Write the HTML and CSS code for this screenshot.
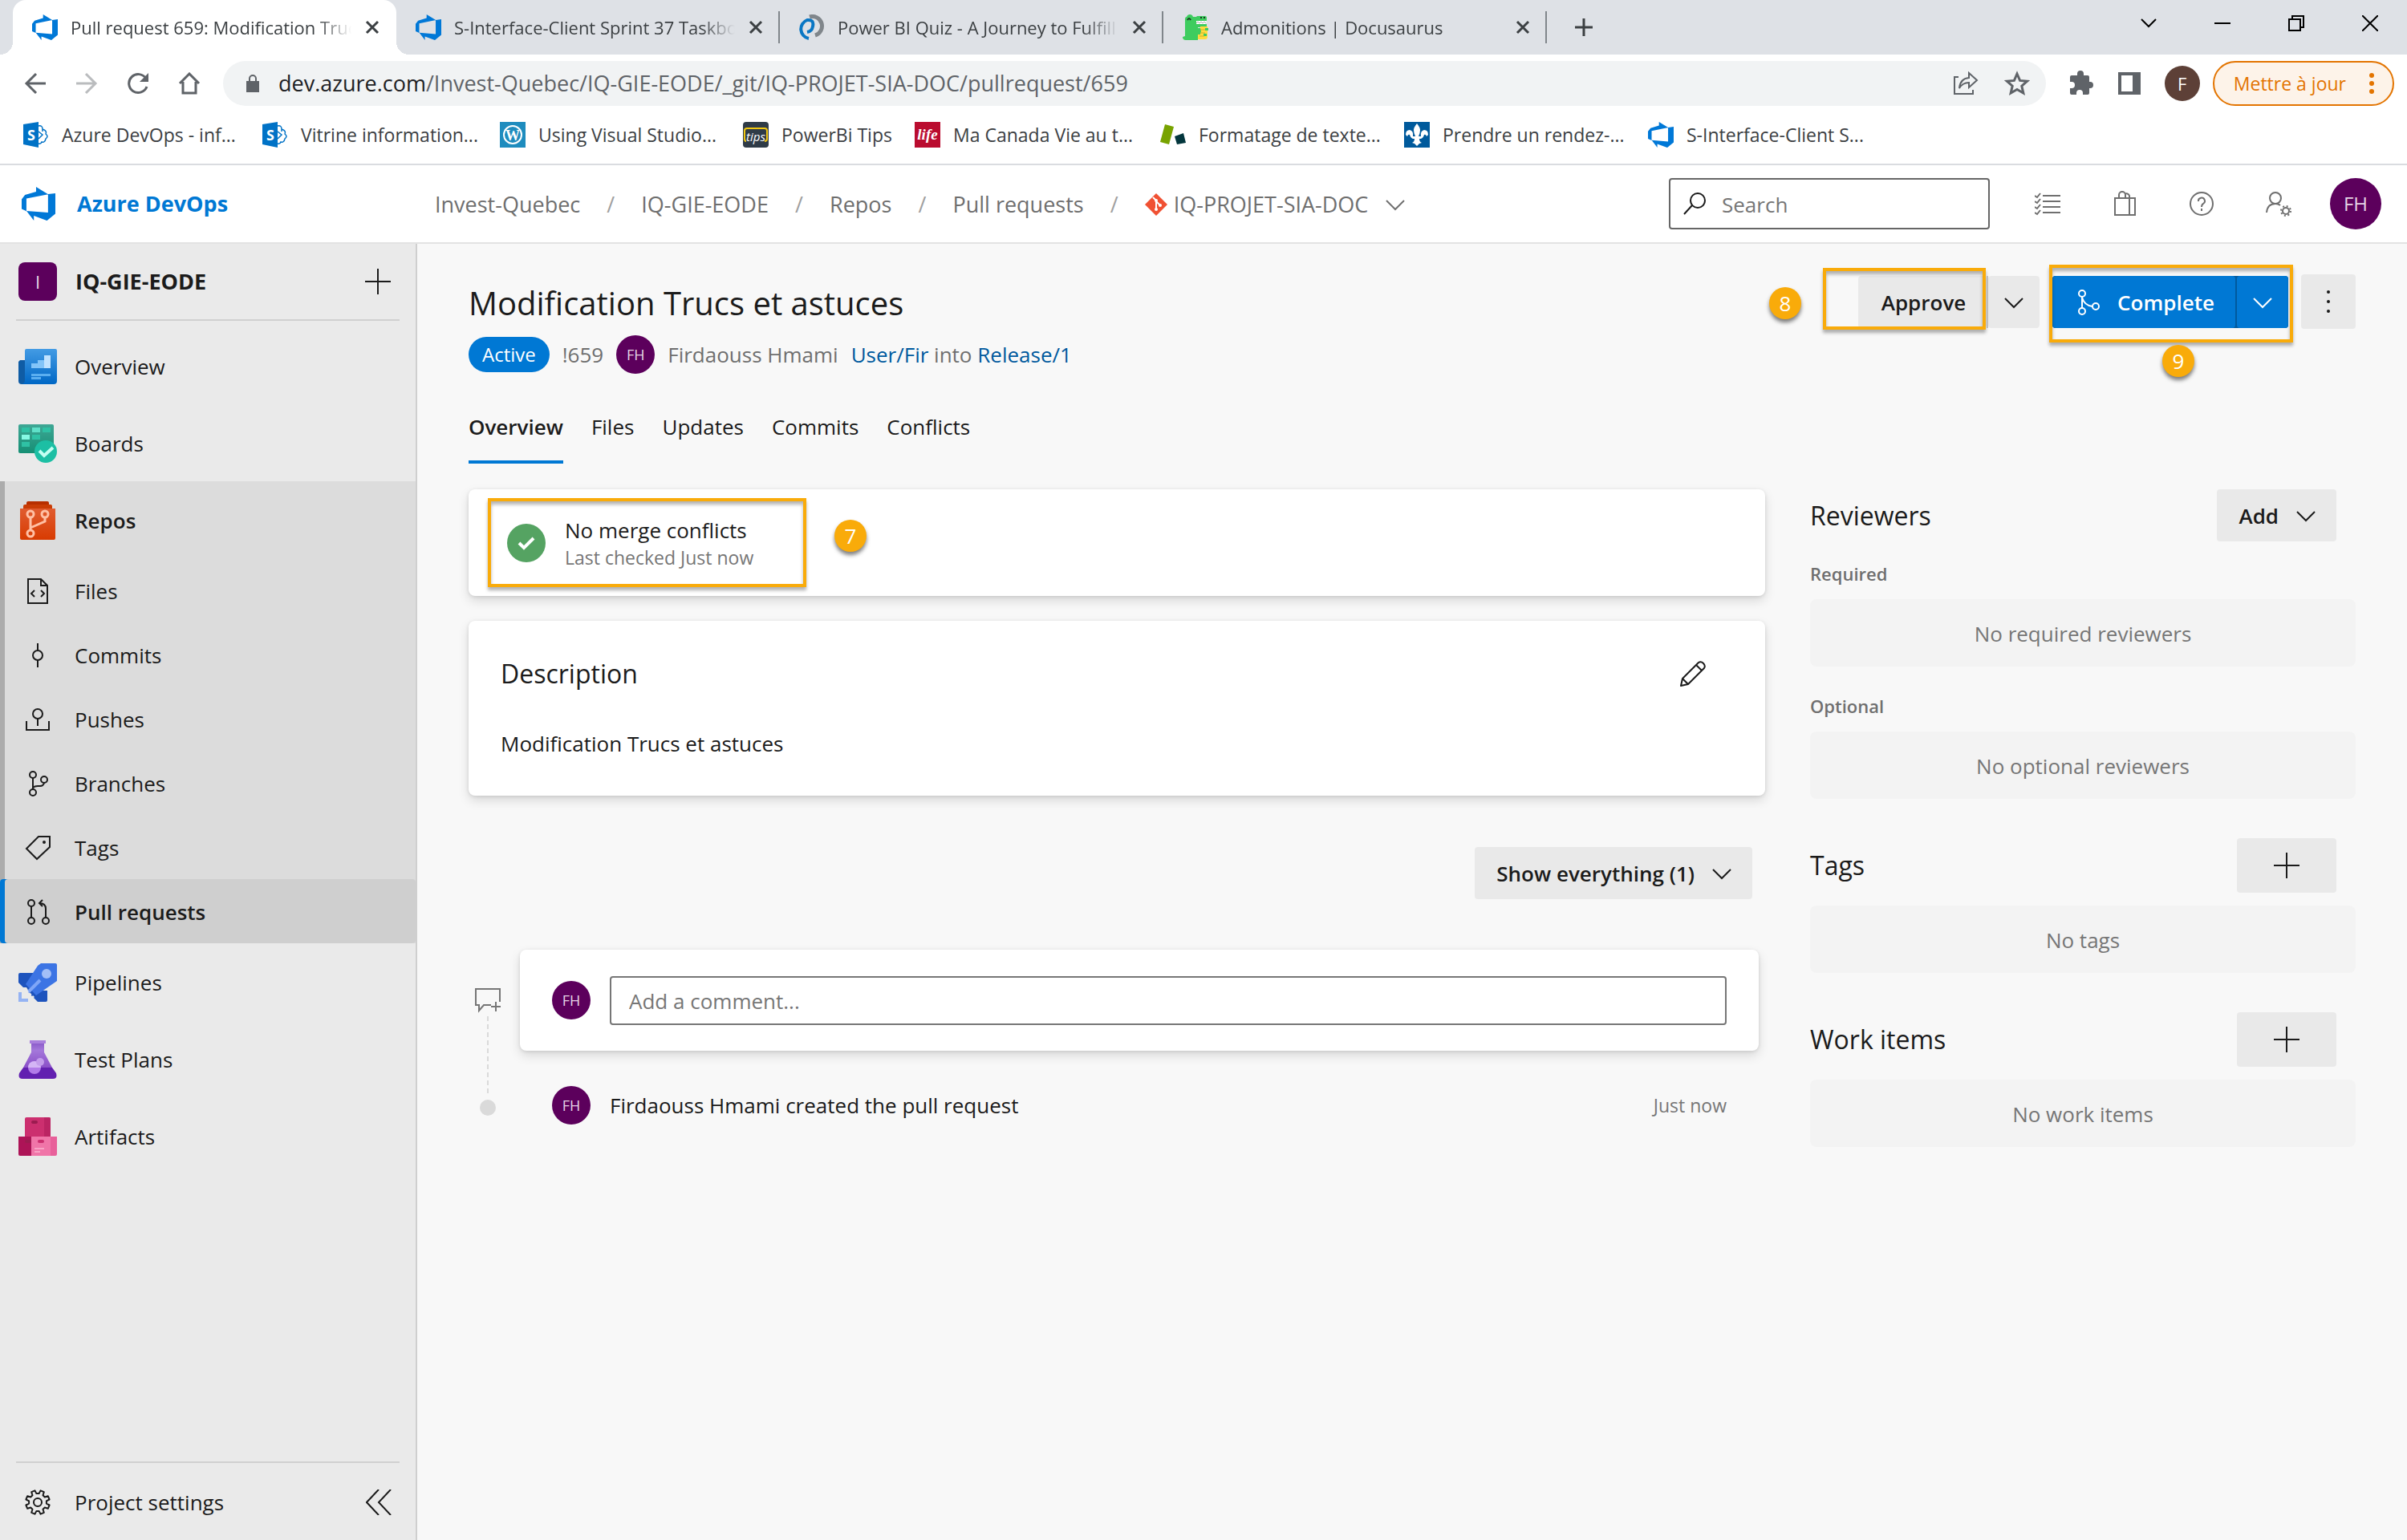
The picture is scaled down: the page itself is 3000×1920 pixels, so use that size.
FILE: index.html
```html
<!DOCTYPE html>
<html lang="en">
<head>
<meta charset="utf-8">
<title>Pull request 659: Modification Trucs et astuces</title>
<link rel="stylesheet" href="styles.css">
</head>
<body>
<svg class="sprite" aria-hidden="true">
  <symbol id="devops" viewBox="1 1 16 16"><path fill="#0078d7" d="M17 4v9.74l-4 3.28-6.2-2.26V17l-3.51-4.59 10.23.8V4.44zm-3.41.49L7.85 1v2.29L2.58 4.84 1 6.87v4.61l2.26 1V6.57z"/></symbol>
  <symbol id="close" viewBox="0 0 20 20"><path d="M3 3l14 14M17 3L3 17" fill="none" stroke="currentColor" stroke-width="3"/></symbol>
  <symbol id="chevron" viewBox="0 0 28 28"><path d="M3 9l11 11L25 9" fill="none" stroke="currentColor" stroke-width="2"/></symbol>
  <symbol id="plus" viewBox="0 0 32 32"><path d="M16 0v32M0 16h32" fill="none" stroke="currentColor" stroke-width="2"/></symbol>
  <symbol id="sharepoint" viewBox="0 0 32 32"><path fill="#0072c6" d="M0 3l19-3v32L0 28z"/><path d="M19 5q5-1 5 4 6 2 4 6 4 3 0 6-1 5-5 4-1 3-4 2M19 12l5 4-5 5M24 9v3" fill="none" stroke="#0072c6" stroke-width="1.5"/><text x="5" y="23" class="glyph-s">S</text></symbol>
  <symbol id="gear" viewBox="0 0 32 32"><path d="M17.6 5.1L19.5 1.4 23.8 3.2 22.5 7.2 24.8 9.5 28.8 8.2 30.6 12.5 26.9 14.4V17.6L30.6 19.5 28.8 23.8 24.8 22.5 22.5 24.8 23.8 28.8 19.5 30.6 17.6 26.9H14.4L12.5 30.6 8.2 28.8 9.5 24.8 7.2 22.5 3.2 23.8 1.4 19.5 5.1 17.6V14.4L1.4 12.5 3.2 8.2 7.2 9.5 9.5 7.2 8.2 3.2 12.5 1.4 14.4 5.1Z" fill="none" stroke="currentColor" stroke-width="2" stroke-linejoin="round"/><circle cx="16" cy="16" r="5" fill="none" stroke="currentColor" stroke-width="2"/></symbol>
</svg>

<header class="browser">
  <div class="tabstrip">
    <div class="tab tab-active"><svg class="i32"><use href="#devops"/></svg><span class="tab-title">Pull request 659: Modification Trucs</span><button class="plain" aria-label="Close tab"><svg class="i20"><use href="#close"/></svg></button></div>
    <div class="tab"><svg class="i32"><use href="#devops"/></svg><span class="tab-title">S-Interface-Client Sprint 37 Taskboard</span><button class="plain" aria-label="Close tab"><svg class="i20"><use href="#close"/></svg></button></div>
    <div class="tab"><svg class="i32" viewBox="0 0 32 32"><path d="M13 3a12 12 0 0 1 7 23" fill="none" stroke="#80868b" stroke-width="5"/><path d="M12 30A12 12 0 0 1 10 7q9-1 7 8-1 6-7 7" fill="none" stroke="#0a77c4" stroke-width="4"/></svg><span class="tab-title">Power BI Quiz - A Journey to Fulfill</span><button class="plain" aria-label="Close tab"><svg class="i20"><use href="#close"/></svg></button></div>
    <div class="tab"><svg class="i32" viewBox="0 0 32 32"><path fill="#3ecc5f" d="M3 6q0-3 2-3 1-3 4-3t4 3h4l1-1h10q2 0 2 2v5H17v3h13v4H19v3h4v8h-4v5H4q-4 0-4-4l3-1z"/><path fill="#ffdb3d" d="M22 15h9v13q0 3-3 3h-9v-6h3z"/><path fill="#3ecc5f" d="M16 17h6l1 4-1 3h-6zM28 17h4v3h-4zM26 24h4v3h-4z"/><path d="M22 19h6M22 23h6M21 27h6" stroke="#c9b42c"/><path d="M17 8h13l-1 4H17z" fill="#fff"/><path d="M17 11l2-2 2 2 2-2 2 2 2-2 2 2" fill="none" stroke="#aaa"/><path d="M6 7q2-4 4 0M22 4h2M26 4h2" fill="none" stroke="#1d3a24" stroke-width="2"/></svg><span class="tab-title">Admonitions | Docusaurus</span><button class="plain" aria-label="Close tab"><svg class="i20"><use href="#close"/></svg></button></div>
    <button class="plain new-tab" aria-label="New tab"><svg class="i24" viewBox="0 0 24 24"><path d="M12 1v22M1 12h22" stroke="currentColor" stroke-width="3"/></svg></button>
    <div class="window-buttons">
      <button class="plain" aria-label="Search tabs"><svg class="i20" viewBox="0 0 20 20"><path d="M1 5l9 9 9-9" fill="none" stroke="#000" stroke-width="2"/></svg></button>
      <button class="plain" aria-label="Minimize"><svg class="i20" viewBox="0 0 20 20"><path d="M0 10h20" stroke="#000" stroke-width="2"/></svg></button>
      <button class="plain" aria-label="Restore"><svg class="i20" viewBox="0 0 20 20"><path d="M1 5h14v14H1zM5 5V1h14v14h-4" fill="none" stroke="#000" stroke-width="2"/></svg></button>
      <button class="plain" aria-label="Close window"><svg class="i20" viewBox="0 0 20 20"><path d="M0 0l20 20M20 0L0 20" stroke="#000" stroke-width="2"/></svg></button>
    </div>
  </div>

  <div class="toolbar">
    <div class="nav-buttons">
      <button class="plain" aria-label="Back"><svg class="i28" viewBox="0 0 28 28"><path d="M27 14H3M15 2L3 14l12 12" fill="none" stroke="currentColor" stroke-width="3"/></svg></button>
      <button class="plain disabled" aria-label="Forward"><svg class="i28" viewBox="0 0 28 28"><path d="M1 14h24M13 2l12 12-12 12" fill="none" stroke="currentColor" stroke-width="3"/></svg></button>
      <button class="plain" aria-label="Reload"><svg class="i28" viewBox="0 0 28 28"><path d="M24 8A11.500 11.500 0 1 0 25 18" fill="none" stroke="currentColor" stroke-width="3"/><path d="M27 1v11H16z" fill="currentColor"/></svg></button>
      <button class="plain" aria-label="Home"><svg class="i28" viewBox="0 0 28 28"><path d="M2 14L14 2l12 12M6 12v14h16V12" fill="none" stroke="currentColor" stroke-width="3"/></svg></button>
    </div>
    <div class="address">
      <svg class="lock" viewBox="0 0 18 24"><path d="M1 9h16v14H1z" fill="currentColor"/><path d="M5 10V6a4 4 0 0 1 8 0v4" fill="none" stroke="currentColor" stroke-width="2"/></svg>
      <span class="url"><span class="host">dev.azure.com</span>/Invest-Quebec/IQ-GIE-EODE/_git/IQ-PROJET-SIA-DOC/pullrequest/659</span>
      <button class="plain" aria-label="Share"><svg class="i32" viewBox="0 0 32 32"><path d="M7 8H2v21h23v-5" fill="none" stroke="currentColor" stroke-width="2"/><path d="M8 22q1-12 12-13V3l10 9-10 9v-6q-8 0-12 7z" fill="none" stroke="currentColor" stroke-width="2"/></svg></button>
      <button class="plain" aria-label="Bookmark"><svg class="i32" viewBox="0 0 32 32"><path d="M16 4l3.600 8.400 9 .8-6.800 6 2 8.800L16 23.400 8.200 28l2-8.800-6.800-6 9-.8z" fill="none" stroke="currentColor" stroke-width="3"/></svg></button>
    </div>
    <button class="plain" aria-label="Extensions"><svg class="i32" viewBox="0 0 32 32"><path fill="currentColor" d="M2 8q0-2 2-2h7V4a4 4 0 0 1 8 0v2h5q2 0 2 2v6h1a4 4 0 0 1 0 8h-1v6q0 2-2 2h-6v-2a4 4 0 0 0-8 0v2H4q-2 0-2-2v-6h2a4 4 0 0 0 0-8H2z"/></svg></button>
    <button class="plain" aria-label="Side panel"><svg class="i32" viewBox="0 0 32 32"><path fill="currentColor" fill-rule="evenodd" d="M2 2h28v28H2zM6 6v20h14V6z"/></svg></button>
    <span class="profile">F</span>
    <button class="update">Mettre à jour<svg class="dots" viewBox="0 0 8 28"><circle cx="4" cy="4" r="3"/><circle cx="4" cy="14" r="3"/><circle cx="4" cy="24" r="3"/></svg></button>
  </div>

  <nav class="bookmarks">
    <a href="#"><svg class="i32"><use href="#sharepoint"/></svg>Azure DevOps - inf...</a>
    <a href="#"><svg class="i32"><use href="#sharepoint"/></svg>Vitrine information...</a>
    <a href="#"><svg class="i32" viewBox="0 0 32 32"><path fill="#1e8cbe" d="M0 0h32v32H0z"/><circle cx="16" cy="16" r="11" fill="none" stroke="#fff" stroke-width="2"/><text x="16" y="23" text-anchor="middle" class="glyph-w">W</text></svg>Using Visual Studio...</a>
    <a href="#"><svg class="i32" viewBox="0 0 32 32"><rect width="32" height="32" rx="4" fill="#2f3b47"/><path d="M4 24q-2 0-2-3V11q0-3 3-3h22q3 0 3 3v10q0 3-3 3" fill="none" stroke="#f2c811" stroke-width="2"/><text x="16" y="24" text-anchor="middle" class="glyph-tips">tips</text></svg>PowerBi Tips</a>
    <a href="#"><svg class="i32" viewBox="0 0 32 32"><path fill="#ba0c2f" d="M0 0h32v32H0z"/><text x="16" y="22" text-anchor="middle" class="glyph-life">life</text></svg>Ma Canada Vie au t...</a>
    <a href="#"><svg class="i32" viewBox="0 0 32 32"><path fill="#78a300" d="M6 3l11 3-6 22L0 25z"/><path fill="#03363d" d="M18 18l11-4 3 12-11 2z"/></svg>Formatage de texte...</a>
    <a href="#"><svg class="i32" viewBox="0 0 32 32"><path fill="#005a9c" d="M0 0h32v32H0z"/><path fill="#fff" d="M16 2q4 5 4 8 0 4-2 8h3q-1-7 4-8 5 0 5 6l-2 2q-1-3-3-2-1 4-4 5h-2q0 4 3 5l-3 1-3 3-3-3-3-1q3-1 3-5h-2q-3-1-4-5-2-1-3 2l-2-2q0-6 5-6 5 1 4 8h3q-2-4-2-8 0-3 4-8z"/></svg>Prendre un rendez-...</a>
    <a href="#"><svg class="i32"><use href="#devops"/></svg>S-Interface-Client S...</a>
  </nav>
</header>

<header class="app-header">
  <a class="brand" href="#"><svg class="i42"><use href="#devops"/></svg>Azure DevOps</a>
  <nav class="crumbs">
    <a href="#">Invest-Quebec</a><span class="slash">/</span><a href="#">IQ-GIE-EODE</a><span class="slash">/</span><a href="#">Repos</a><span class="slash">/</span><a href="#">Pull requests</a><span class="slash">/</span>
    <a href="#" class="repo"><svg class="i28" viewBox="0 0 28 28"><path fill="#f05133" d="M14 0l14 14-14 14L0 14z"/><path d="M10 5l4 4v11M14 10l5 5" stroke="#fff" stroke-width="2" fill="none"/><circle cx="14" cy="9" r="2" fill="#fff"/><circle cx="14" cy="20" r="2" fill="#fff"/><circle cx="19" cy="15" r="2" fill="#fff"/></svg>IQ-PROJET-SIA-DOC</a><svg class="i28 crumb-chevron"><use href="#chevron"/></svg>
  </nav>
  <label class="search"><svg class="i28" viewBox="0 0 28 28"><circle cx="18" cy="10" r="9" fill="none" stroke="#1b1b1b" stroke-width="2"/><path d="M11 16L1 27" stroke="#1b1b1b" stroke-width="2"/></svg><input type="text" placeholder="Search" aria-label="Search"></label>
  <div class="header-icons">
    <button class="plain" aria-label="My work"><svg class="i32" viewBox="0 0 32 32"><path d="M10 6h22M10 13h22M10 20h22M10 27h22M0 6l3 2 4-5M0 13l3 2 4-5M0 20l3 2 4-5M0 27l3 2 4-5" fill="none" stroke="currentColor" stroke-width="2"/></svg></button>
    <button class="plain" aria-label="Marketplace"><svg class="i32" viewBox="0 0 32 32"><path d="M4 9h25v21H4zM22 9v21M9 9V5a4 4 0 0 1 8 0v4M16 4a4 4 0 0 1 6 2v3" fill="none" stroke="currentColor" stroke-width="2"/></svg></button>
    <button class="plain" aria-label="Help"><svg class="i32" viewBox="0 0 32 32"><circle cx="16" cy="16" r="14" fill="none" stroke="currentColor" stroke-width="2"/><path d="M12 13a4 4 0 1 1 6 3q-2 1-2 4M16 22v3" fill="none" stroke="currentColor" stroke-width="2"/></svg></button>
    <button class="plain" aria-label="User settings"><svg class="i32" viewBox="0 0 32 32"><circle cx="12" cy="9" r="7" fill="none" stroke="currentColor" stroke-width="2"/><path d="M1 27q1-11 11-11 4 0 6 2" fill="none" stroke="currentColor" stroke-width="2"/><circle cx="25" cy="25" r="4" fill="none" stroke="currentColor" stroke-width="2"/><circle cx="25" cy="25" r="6" fill="none" stroke="currentColor" stroke-width="2" stroke-dasharray="2 2.710"/></svg></button>
    <span class="avatar avatar-lg">FH</span>
  </div>
</header>

<div class="workspace">
  <aside class="sidebar">
    <div class="project"><span class="tile">I</span><strong>IQ-GIE-EODE</strong><button class="plain" aria-label="New"><svg class="i32"><use href="#plus"/></svg></button></div>
    <nav class="hubs">
      <a class="hub" href="#"><svg class="i48" viewBox="0 0 48 48"><path fill="#0f5ca5" d="M2 16h8v30H4q-4 0-4-4V18z"/><defs><linearGradient id="ov" x2="0" y2="1"><stop stop-color="#439be4"/><stop offset="1" stop-color="#0067c5"/></linearGradient></defs><path fill="url(#ov)" d="M8 4q0-2 2-2h36q2 0 2 2v38q0 4-4 4H4q4-1 4-5z"/><path fill="#83c4f8" d="M16 20h8v-4h8v10H16z"/><path fill="#c0e2ff" d="M32 10h8v16h-8z"/><path fill="#5aaef0" d="M16 33h24v3H16zM16 37h12v3H16z"/></svg>Overview</a>
      <a class="hub" href="#"><svg class="i48" viewBox="0 0 48 48"><defs><linearGradient id="bo" x2="0" y2="1"><stop stop-color="#3fa795"/><stop offset="1" stop-color="#158f74"/></linearGradient></defs><rect y="0" width="44" height="36" rx="2" fill="url(#bo)"/><path fill="#2fc1a4" d="M4 4h10v6H4zM30 4h10v6H30zM17 13h10v6H17zM4 22h10v6H4z"/><path fill="#5fe0c8" d="M17 4h10v6H17z"/><path fill="#86f9e4" d="M4 13h10v6H4z"/><circle cx="34" cy="34" r="14" fill="#1cbfa4"/><path d="M26 33l6 6 11-10" fill="none" stroke="#c3fff2" stroke-width="4"/></svg>Boards</a>
      <div class="hub-group">
        <a class="hub selected-hub" href="#"><svg class="i48" viewBox="0 0 48 48"><path fill="#b72f00" d="M10 2q0-2 2-2h24q2 0 2 2v4H10z"/><path fill="#c93c05" d="M6 6q0-2 2-2h32q2 0 2 2v4H6z"/><defs><linearGradient id="re" x2="0" y2="1"><stop stop-color="#e05c30"/><stop offset="1" stop-color="#d83b01"/></linearGradient></defs><path fill="url(#re)" d="M2 9h44v37q0 2-2 2H4q-2 0-2-2z"/><g fill="none" stroke="#ffc0a5" stroke-width="3"><path d="M15 20v17M33 20v5L15 33"/><circle cx="15" cy="16" r="4"/><circle cx="33" cy="16" r="4"/><circle cx="15" cy="40" r="4"/></g></svg>Repos</a>
        <a class="sub" href="#"><span class="slot"><svg class="i32" viewBox="0 0 32 32"><path d="M4 1h16l8 8v22H4zM20 1v8h8M12 15l-4 4 4 4M20 15l4 4-4 4" fill="none" stroke="currentColor" stroke-width="2"/></svg></span>Files</a>
        <a class="sub" href="#"><span class="slot"><svg class="i32" viewBox="0 0 32 32"><circle cx="16" cy="16" r="6" fill="none" stroke="currentColor" stroke-width="2"/><path d="M16 1v9M16 22v9" stroke="currentColor" stroke-width="2"/></svg></span>Commits</a>
        <a class="sub" href="#"><span class="slot"><svg class="i32" viewBox="0 0 32 32"><circle cx="16" cy="9" r="6" fill="none" stroke="currentColor" stroke-width="2"/><path d="M16 15v9M2 18v11h28V18" fill="none" stroke="currentColor" stroke-width="2"/></svg></span>Pushes</a>
        <a class="sub" href="#"><span class="slot"><svg class="i32" viewBox="0 0 32 32"><g fill="none" stroke="currentColor" stroke-width="2"><circle cx="10" cy="5" r="4"/><circle cx="10" cy="27" r="4"/><circle cx="24" cy="11" r="4"/><path d="M10 9v14M10 21q2-2 6-2h3q4 0 5-4"/></g></svg></span>Branches</a>
        <a class="sub" href="#"><span class="slot"><svg class="i32" viewBox="0 0 32 32"><path d="M17 2h14v13L15 30 2 17z" fill="none" stroke="currentColor" stroke-width="2"/><circle cx="24" cy="9" r="2" fill="currentColor"/></svg></span>Tags</a>
        <a class="sub selected" href="#"><span class="slot"><svg class="i32" viewBox="0 0 32 32"><g fill="none" stroke="currentColor" stroke-width="2"><circle cx="8" cy="5" r="4"/><circle cx="8" cy="27" r="4"/><circle cx="26" cy="27" r="4"/><path d="M8 9v14M26 23V12q0-7-8-7M22 1l-4 4 4 4"/></g></svg></span>Pull requests</a>
      </div>
      <a class="hub" href="#"><svg class="i48" viewBox="0 0 48 48"><path fill="#1d53bd" d="M0 14q0-2 2-2h20v22h14v12q0 2-2 2H24l-8-8-6-10H6L0 24z"/><path fill="#3c74e4" d="M28 0h18q2 0 2 2v20L22 40 9 26 24 3z"/><circle cx="35" cy="13" r="6" fill="#a3bff7"/><path d="M12 36l15-15" stroke="#7fa6f7" stroke-width="4"/><path fill="#95b3f3" d="M0 36h4v8h8v4H0z"/><path d="M6 31l13 12" stroke="#eaeaea" stroke-width="3" stroke-dasharray="3 2"/></svg>Pipelines</a>
      <a class="hub" href="#"><svg class="i48" viewBox="0 0 48 48"><defs><linearGradient id="tp" x2="0" y2="1"><stop stop-color="#8a5ac9"/><stop offset=".3" stop-color="#a478da"/><stop offset="1" stop-color="#8a4fc8"/></linearGradient></defs><path fill="url(#tp)" d="M16 3h16v12l10 19H6l10-19z"/><path fill="#a97fdc" d="M14 0h20v4H14z"/><path fill="#6220b0" d="M6 34h36l5 7q2 7-4 7H5q-6 0-4-7z"/><circle cx="20" cy="34" r="8" fill="#b27be8"/><path fill="#d4b5f5" d="M12 34a8 8 0 0 1 16 0z"/><circle cx="27" cy="27" r="5" fill="#c39deb"/></svg>Test Plans</a>
      <a class="hub" href="#"><svg class="i48" viewBox="0 0 48 48"><path fill="#cc2f6f" d="M10 0h28q2 0 2 2v22H8V2q0-2 2-2z"/><path fill="#bb2463" d="M32 0h6q2 0 2 2v22h-8z"/><path fill="#ad1457" d="M0 24h16v24H2q-2 0-2-2z"/><path fill="#f075a8" d="M16 24h24v24H16z"/><path fill="#e8609a" d="M40 24h8v22q0 2-2 2h-6z"/><path stroke="#9b1c50" stroke-width="4" stroke-linecap="round" d="M18 6h4M10 30h4"/><path stroke="#cc2f6f" stroke-width="4" stroke-linecap="round" d="M26 30h4"/><path fill="#f9a3c6" d="M20 38h12v2H20zM20 42h7v2h-7z"/></svg>Artifacts</a>
    </nav>
    <div class="settings"><a href="#"><span class="slot"><svg class="i32"><use href="#gear"/></svg></span>Project settings</a><button class="plain" aria-label="Collapse"><svg class="i32" viewBox="0 0 32 32"><path d="M16 0L1 16l15 16M31 0L16 16l15 16" fill="none" stroke="currentColor" stroke-width="2"/></svg></button></div>
  </aside>

  <main class="main">
    <div class="pr-top">
      <div>
        <h1>Modification Trucs et astuces</h1>
        <div class="pr-meta"><span class="pill">Active</span><span class="pr-id">!659</span><span class="avatar">FH</span><span class="author">Firdaouss Hmami</span><span><a href="#">User/Fir</a> into <a href="#">Release/1</a></span></div>
      </div>
      <div class="actions">
        <div class="split"><button class="btn approve">Approve</button><button class="btn drop" aria-label="Approve options"><svg class="i28"><use href="#chevron"/></svg></button><span class="callout callout-approve"></span><span class="marker marker-8">8</span></div>
        <div class="split"><button class="btn primary complete"><svg class="i32" viewBox="0 0 32 32"><g fill="none" stroke="currentColor" stroke-width="2"><circle cx="8" cy="5" r="4"/><circle cx="8" cy="27" r="4"/><circle cx="25" cy="21" r="4"/><path d="M8 9v14M8 10q3 10 13 11"/></g></svg>Complete</button><button class="btn primary drop" aria-label="Complete options"><svg class="i28"><use href="#chevron"/></svg></button><span class="callout callout-complete"></span><span class="marker marker-9">9</span></div>
        <button class="btn more" aria-label="More actions"><svg class="dots" viewBox="0 0 8 28"><circle cx="4" cy="2" r="2"/><circle cx="4" cy="14" r="2"/><circle cx="4" cy="26" r="2"/></svg></button>
      </div>
    </div>
    <nav class="pr-tabs"><a class="current" href="#">Overview</a><a href="#">Files</a><a href="#">Updates</a><a href="#">Commits</a><a href="#">Conflicts</a></nav>

    <div class="columns">
      <div class="content">
        <section class="card status">
          <svg class="i48" viewBox="0 0 48 48"><circle cx="24" cy="24" r="24" fill="#55a362"/><path d="M15 24l6 6 12-12" fill="none" stroke="#fff" stroke-width="4"/></svg>
          <div><p>No merge conflicts</p><p class="small">Last checked Just now</p></div>
          <span class="callout callout-status"></span><span class="marker marker-7">7</span>
        </section>
        <section class="card description">
          <div class="card-head"><h2>Description</h2><button class="plain" aria-label="Edit"><svg class="i32" viewBox="0 0 32 32"><path d="M1 31l2-9L23 2q3-2 6 1t1 6L10 29zM3 22l7 7M20 5l7 7" fill="none" stroke="currentColor" stroke-width="2" stroke-linejoin="round"/></svg></button></div>
          <p>Modification Trucs et astuces</p>
        </section>
        <div class="filter"><button class="btn">Show everything (1)<svg class="i28"><use href="#chevron"/></svg></button></div>
        <div class="timeline">
          <div class="rail"><svg class="i32" viewBox="0 0 32 32"><path d="M20 22h-9l-6 7v-7H1V2h30v16" fill="none" stroke="#767676" stroke-width="2"/><path d="M26 18v12M20 24h12" stroke="#767676" stroke-width="2"/></svg><span class="dash"></span><span class="dot"></span></div>
          <div class="events">
            <div class="card comment"><span class="avatar">FH</span><input type="text" placeholder="Add a comment..." aria-label="Add a comment"></div>
            <div class="event"><span class="avatar">FH</span><span>Firdaouss Hmami created the pull request</span><time class="small">Just now</time></div>
          </div>
        </div>
      </div>

      <aside class="details">
        <section>
          <div class="detail-head"><h2>Reviewers</h2><button class="btn">Add<svg class="i28"><use href="#chevron"/></svg></button></div>
          <h3>Required</h3><div class="empty">No required reviewers</div>
          <h3 class="optional">Optional</h3><div class="empty">No optional reviewers</div>
        </section>
        <section>
          <div class="detail-head"><h2>Tags</h2><button class="btn add" aria-label="Add tag"><svg class="i32"><use href="#plus"/></svg></button></div>
          <div class="empty">No tags</div>
        </section>
        <section>
          <div class="detail-head"><h2>Work items</h2><button class="btn add" aria-label="Add work item"><svg class="i32"><use href="#plus"/></svg></button></div>
          <div class="empty">No work items</div>
        </section>
      </aside>
    </div>
  </main>
</div>
</body>
</html>
```
FILE: styles.css
```css
* { box-sizing: border-box; }
body {
  margin: 0;
  min-height: 100vh;
  display: flex;
  flex-direction: column;
  font: 26px/36px "Open Sans", "Noto Sans", sans-serif;
  color: #1b1b1b;
  background: #f8f8f8;
}
h1, h2, h3, p { margin: 0; font-weight: 400; }
a { color: inherit; text-decoration: none; }
button, input { font: inherit; color: inherit; }
svg { flex: none; display: block; }
.sprite { position: absolute; width: 0; height: 0; }
.i20 { width: 20px; height: 20px; }
.i24 { width: 24px; height: 24px; }
.i28 { width: 28px; height: 28px; }
.i32 { width: 32px; height: 32px; }
.i42 { width: 42px; height: 42px; }
.i48 { width: 48px; height: 48px; }
.plain { padding: 0; border: 0; background: none; flex: none; }
.small { font-size: 23px; line-height: 32px; color: #767676; }
.glyph-s { font: bold 18px "Open Sans", sans-serif; fill: #fff; }
.glyph-w { font: bold 18px "Liberation Serif", serif; fill: #fff; }
.glyph-tips { font: italic 15px "Open Sans", sans-serif; fill: #fff; }
.glyph-life { font: italic bold 19px "Liberation Serif", serif; fill: #fff; }

/* Browser chrome */
.browser { background: #fff; color: #3c4043; border-bottom: 2px solid #dadce0; }
.tabstrip { display: flex; align-items: center; height: 68px; padding-left: 16px; background: #dee1e6; }
.tab {
  position: relative;
  display: flex;
  align-items: center;
  gap: 16px;
  width: 478px;
  height: 68px;
  padding: 0 20px 0 24px;
  font-size: 22px;
}
.tab-title {
  flex: 1;
  min-width: 0;
  overflow: hidden;
  white-space: nowrap;
  mask-image: linear-gradient(90deg, #000 88%, transparent);
}
.tab:not(.tab-active)::after {
  content: "";
  position: absolute;
  right: 0;
  width: 2px;
  height: 40px;
  background: #80868b;
}
.tab-active { background: #fff; border-radius: 16px 16px 0 0; }
.tab-active::before, .tab-active::after {
  content: "";
  position: absolute;
  bottom: 0;
  width: 16px;
  height: 16px;
}
.tab-active::before { left: -16px; background: radial-gradient(circle at 0 0, transparent 16px, #fff 16px); }
.tab-active::after { right: -16px; background: radial-gradient(circle at 100% 0, transparent 16px, #fff 16px); }
.new-tab { margin-left: 34px; }
.window-buttons { display: flex; gap: 72px; margin-left: auto; padding: 0 36px 10px 0; }
.toolbar { display: flex; align-items: center; gap: 28px; padding: 8px 16px 8px 30px; color: #5f6368; }
.nav-buttons { display: flex; gap: 36px; }
.disabled { color: #babcbe; }
.address {
  flex: 1;
  display: flex;
  align-items: center;
  gap: 32px;
  height: 56px;
  padding: 0 20px 0 28px;
  border-radius: 28px;
  background: #f1f3f4;
}
.lock { width: 18px; height: 24px; }
.url { flex: 1; margin-left: -9px; font-size: 27px; }
.host { color: #202124; }
.profile {
  width: 44px;
  height: 44px;
  border-radius: 50%;
  background: #5d4037;
  color: #fff;
  font-size: 22px;
  line-height: 44px;
  text-align: center;
}
.update {
  display: flex;
  align-items: center;
  gap: 28px;
  height: 56px;
  margin-left: -12px;
  padding: 0 22px 0 24px;
  border: 2px solid #e37400;
  border-radius: 28px;
  background: #fdf3e9;
  color: #e37400;
  font-size: 23px;
}
.dots { width: 8px; height: 28px; fill: currentColor; }
.bookmarks {
  display: grid;
  grid-template-columns: 298px 296px 303px 214px 306px 304px 304px auto;
  justify-content: start;
  padding: 10px 29px 18px;
  font-size: 23px;
}
.bookmarks a { display: flex; align-items: center; gap: 16px; height: 36px; white-space: nowrap; }

/* Product header */
.app-header {
  display: flex;
  align-items: center;
  height: 98px;
  padding: 0 32px 0 27px;
  background: #fff;
  border-bottom: 2px solid #e3e3e3;
}
.brand { display: flex; align-items: center; gap: 27px; width: 515px; color: #0078d4; font-size: 27px; font-weight: 700; }
.crumbs { flex: 1; display: flex; align-items: center; gap: 32px; padding-top: 2px; color: #6f6f6f; font-size: 27px; }
.slash { width: 12px; text-align: center; color: #a0a0a0; }
.repo { display: flex; align-items: center; gap: 8px; }
.crumb-chevron { margin-left: -12px; }
.search {
  display: flex;
  align-items: center;
  gap: 20px;
  width: 400px;
  height: 64px;
  padding: 0 16px;
  border: 2px solid #666;
  border-radius: 4px;
}
.search input { flex: 1; min-width: 0; padding: 2px 0 0; border: 0; outline: 0; background: none; }
input::placeholder { color: #767676; opacity: 1; }
.header-icons { display: flex; align-items: center; gap: 64px; margin-left: 56px; color: #6f6f6f; }
.avatar {
  flex: none;
  width: 48px;
  height: 48px;
  border-radius: 50%;
  background: #5c005c;
  color: #e5d5e5;
  font-size: 18px;
  line-height: 48px;
  text-align: center;
}
.avatar-lg { width: 64px; height: 64px; margin-left: -16px; font-size: 24px; line-height: 64px; }

/* Sidebar */
.workspace { flex: 1; display: flex; }
.sidebar {
  flex: none;
  width: 520px;
  display: flex;
  flex-direction: column;
  border-right: 2px solid #cfcfcf;
  background: #eaeaea;
}
.project {
  display: flex;
  align-items: center;
  gap: 23px;
  height: 96px;
  margin: 0 20px 8px;
  padding: 0 11px 0 3px;
  border-bottom: 2px solid #d0d0d0;
}
.project strong { flex: 1; font-size: 27px; font-weight: 700; }
.tile {
  width: 48px;
  height: 48px;
  border-radius: 8px;
  background: #5c005c;
  color: #e5d5e5;
  font-size: 22px;
  line-height: 48px;
  text-align: center;
}
.hub, .sub { display: flex; align-items: center; gap: 22px; padding: 2px 0 0 23px; }
.hub { height: 96px; }
.sub { height: 80px; }
.slot { display: flex; justify-content: center; width: 48px; }
.hub-group { background: #dcdcdc; box-shadow: inset 6px 0 #acacac; }
.selected-hub { font-weight: 600; }
.selected { background: #cfcfcf; box-shadow: inset 6px 0 #0078d4; border-radius: 4px; font-weight: 600; }
.settings {
  display: flex;
  align-items: center;
  justify-content: space-between;
  height: 98px;
  margin: auto 20px 0;
  padding: 2px 10px 0 3px;
  border-top: 2px solid #d0d0d0;
}
.settings a { display: flex; align-items: center; gap: 22px; }

/* Pull request */
.main { flex: 1; min-width: 0; padding: 38px 64px 64px; }
.pr-top { display: flex; justify-content: space-between; }
h1 { font-size: 40px; line-height: 72px; }
.pr-meta { display: flex; align-items: center; gap: 16px; height: 56px; color: #6f6f6f; }
.pr-meta a { color: #005a9e; }
.pill { padding: 0 17px; border-radius: 22px; background: #0078d4; color: #fff; font-size: 24px; line-height: 44px; }
.actions { display: flex; align-items: flex-start; gap: 16px; }
.split { position: relative; display: flex; gap: 2px; margin-top: 2px; }
.split:first-child { background: linear-gradient(#c8c8c8, #c8c8c8) 160px 0 / 2px 65px no-repeat; }
.split:nth-child(2) { background: #005a9e; border-radius: 4px; }
.btn {
  display: flex;
  align-items: center;
  justify-content: center;
  gap: 20px;
  height: 65px;
  padding: 0 24px 0 27px;
  border: 0;
  border-radius: 4px;
  background: #e9e9e9;
  font-weight: 600;
  white-space: nowrap;
}
.approve { width: 160px; }
.complete { width: 228px; }
.drop { width: 64px; padding: 0; }
.primary { background: #0078d4; color: #fff; }
.more { width: 68px; height: 68px; padding: 0; }
.callout {
  position: absolute;
  border: 4px solid #f9ab0a;
  box-shadow: 0 4px 4px rgba(0, 0, 0, .3), inset 0 4px 4px rgba(0, 0, 0, .3);
  pointer-events: none;
}
.callout-approve { left: -44px; top: -10px; width: 203px; height: 77px; }
.callout-complete { left: -4px; top: -14px; width: 304px; height: 97px; }
.callout-status { left: 24px; top: 11px; width: 397px; height: 111px; }
.marker {
  position: absolute;
  width: 40px;
  height: 40px;
  border-radius: 50%;
  background: #f9ab0a;
  box-shadow: 0 4px 5px rgba(0, 0, 0, .5);
  color: #fff;
  line-height: 40px;
  text-align: center;
}
.marker-8 { left: -111px; top: 14px; }
.marker-9 { left: 137px; top: 86px; }
.marker-7 { left: 456px; top: 38px; }
.pr-tabs { display: flex; gap: 35px; padding-top: 36px; line-height: 52px; }
.pr-tabs a { height: 72px; }
.pr-tabs .current { border-bottom: 4px solid #0078d4; font-weight: 600; }
.columns { display: grid; grid-template-columns: 1fr 680px; gap: 56px; padding-top: 32px; }
.card { background: #fff; border-radius: 8px; box-shadow: 0 6px 14px rgba(0, 0, 0, .13), 0 1px 4px rgba(0, 0, 0, .11); }
.status { position: relative; display: flex; align-items: center; gap: 24px; height: 133px; padding: 0 48px; }
.description { height: 218px; margin-top: 31px; padding: 42px 74px 0 40px; }
.card-head, .detail-head { display: flex; align-items: center; justify-content: space-between; }
h2 { font-size: 32px; line-height: 48px; }
.description p { margin-top: 45px; }
.filter { display: flex; justify-content: flex-end; padding: 64px 16px 63px 0; }
.timeline { display: flex; gap: 24px; padding-right: 8px; }
.rail { display: flex; flex-direction: column; align-items: center; width: 32px; margin: 47px 0 0 8px; }
.dash { height: 96px; margin: 4px 0 8px; border-left: 2px dashed #dadada; }
.dot { width: 20px; height: 20px; border-radius: 50%; background: #dadada; }
.events { flex: 1; }
.comment { display: flex; align-items: center; gap: 24px; height: 126px; padding: 0 40px; }
.comment input { flex: 1; height: 61px; padding: 2px 22px 0; border: 2px solid #767676; border-radius: 4px; }
.event { display: flex; align-items: center; gap: 24px; padding: 44px 40px 0; }
.event time { margin-left: auto; }

.detail-head { height: 65px; padding-right: 24px; }
.details section + section { margin-top: 49px; }
.details section + section .detail-head { height: 68px; margin-bottom: 16px; }
h3 { margin: 24px 0 16px; color: #6f6f6f; font-size: 22px; font-weight: 600; line-height: 32px; }
.optional { margin-top: 33px; }
.empty { padding-top: 2px; border-radius: 8px; background: #f3f3f3; color: #767676; line-height: 82px; text-align: center; }
.add { width: 124px; height: 68px; padding: 0; }
```
